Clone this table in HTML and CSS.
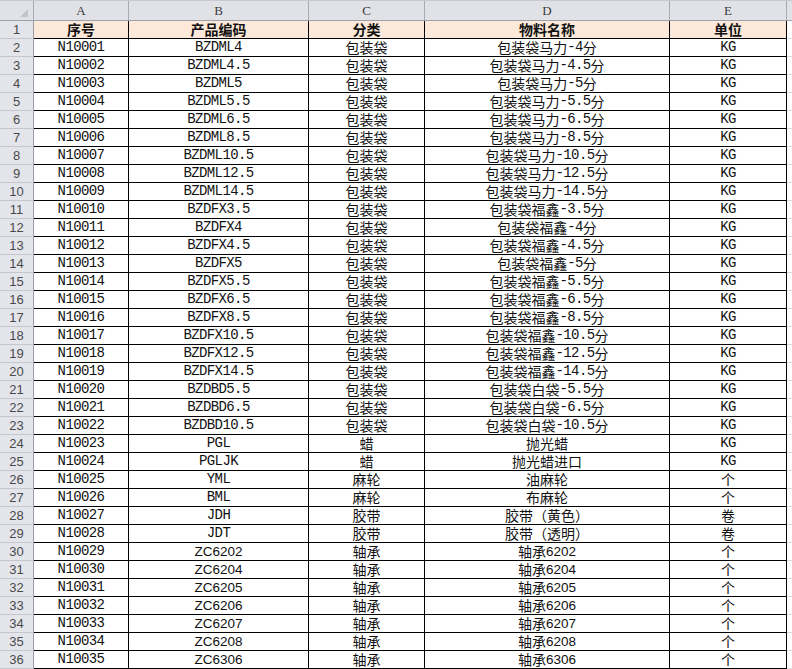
FILE: index.html
```html
<!DOCTYPE html>
<html lang="zh">
<head>
<meta charset="utf-8">
<title>物料表</title>
<link rel="stylesheet" href="styles.css">
</head>
<body>
<div class="sheet">
  <div class="colhead">
    <div class="h rh corner"><span class="tri"></span></div>
    <div class="h a">A</div>
    <div class="h b">B</div>
    <div class="h cc">C</div>
    <div class="h d">D</div>
    <div class="h e">E</div>
    <div class="h f"></div>
  </div>

  <div class="row top">
    <div class="c rh">1</div>
    <div class="c a">序号</div>
    <div class="c b">产品编码</div>
    <div class="c cc">分类</div>
    <div class="c d">物料名称</div>
    <div class="c e">单位</div>
    <div class="c f"></div>
  </div>

  <div class="row"><div class="c rh">2</div><div class="c a m">N10001</div><div class="c b m">BZDML4</div><div class="c cc">包装袋</div><div class="c d">包装袋马力<span class="m">-4</span>分</div><div class="c e m">KG</div><div class="c f"></div></div>
  <div class="row"><div class="c rh">3</div><div class="c a m">N10002</div><div class="c b m">BZDML4.5</div><div class="c cc">包装袋</div><div class="c d">包装袋马力<span class="m">-4.5</span>分</div><div class="c e m">KG</div><div class="c f"></div></div>
  <div class="row"><div class="c rh">4</div><div class="c a m">N10003</div><div class="c b m">BZDML5</div><div class="c cc">包装袋</div><div class="c d">包装袋马力<span class="m">-5</span>分</div><div class="c e m">KG</div><div class="c f"></div></div>
  <div class="row"><div class="c rh">5</div><div class="c a m">N10004</div><div class="c b m">BZDML5.5</div><div class="c cc">包装袋</div><div class="c d">包装袋马力<span class="m">-5.5</span>分</div><div class="c e m">KG</div><div class="c f"></div></div>
  <div class="row"><div class="c rh">6</div><div class="c a m">N10005</div><div class="c b m">BZDML6.5</div><div class="c cc">包装袋</div><div class="c d">包装袋马力<span class="m">-6.5</span>分</div><div class="c e m">KG</div><div class="c f"></div></div>
  <div class="row"><div class="c rh">7</div><div class="c a m">N10006</div><div class="c b m">BZDML8.5</div><div class="c cc">包装袋</div><div class="c d">包装袋马力<span class="m">-8.5</span>分</div><div class="c e m">KG</div><div class="c f"></div></div>
  <div class="row"><div class="c rh">8</div><div class="c a m">N10007</div><div class="c b m">BZDML10.5</div><div class="c cc">包装袋</div><div class="c d">包装袋马力<span class="m">-10.5</span>分</div><div class="c e m">KG</div><div class="c f"></div></div>
  <div class="row"><div class="c rh">9</div><div class="c a m">N10008</div><div class="c b m">BZDML12.5</div><div class="c cc">包装袋</div><div class="c d">包装袋马力<span class="m">-12.5</span>分</div><div class="c e m">KG</div><div class="c f"></div></div>
  <div class="row"><div class="c rh">10</div><div class="c a m">N10009</div><div class="c b m">BZDML14.5</div><div class="c cc">包装袋</div><div class="c d">包装袋马力<span class="m">-14.5</span>分</div><div class="c e m">KG</div><div class="c f"></div></div>
  <div class="row"><div class="c rh">11</div><div class="c a m">N10010</div><div class="c b m">BZDFX3.5</div><div class="c cc">包装袋</div><div class="c d">包装袋福鑫<span class="m">-3.5</span>分</div><div class="c e m">KG</div><div class="c f"></div></div>
  <div class="row"><div class="c rh">12</div><div class="c a m">N10011</div><div class="c b m">BZDFX4</div><div class="c cc">包装袋</div><div class="c d">包装袋福鑫<span class="m">-4</span>分</div><div class="c e m">KG</div><div class="c f"></div></div>
  <div class="row"><div class="c rh">13</div><div class="c a m">N10012</div><div class="c b m">BZDFX4.5</div><div class="c cc">包装袋</div><div class="c d">包装袋福鑫<span class="m">-4.5</span>分</div><div class="c e m">KG</div><div class="c f"></div></div>
  <div class="row"><div class="c rh">14</div><div class="c a m">N10013</div><div class="c b m">BZDFX5</div><div class="c cc">包装袋</div><div class="c d">包装袋福鑫<span class="m">-5</span>分</div><div class="c e m">KG</div><div class="c f"></div></div>
  <div class="row"><div class="c rh">15</div><div class="c a m">N10014</div><div class="c b m">BZDFX5.5</div><div class="c cc">包装袋</div><div class="c d">包装袋福鑫<span class="m">-5.5</span>分</div><div class="c e m">KG</div><div class="c f"></div></div>
  <div class="row"><div class="c rh">16</div><div class="c a m">N10015</div><div class="c b m">BZDFX6.5</div><div class="c cc">包装袋</div><div class="c d">包装袋福鑫<span class="m">-6.5</span>分</div><div class="c e m">KG</div><div class="c f"></div></div>
  <div class="row"><div class="c rh">17</div><div class="c a m">N10016</div><div class="c b m">BZDFX8.5</div><div class="c cc">包装袋</div><div class="c d">包装袋福鑫<span class="m">-8.5</span>分</div><div class="c e m">KG</div><div class="c f"></div></div>
  <div class="row"><div class="c rh">18</div><div class="c a m">N10017</div><div class="c b m">BZDFX10.5</div><div class="c cc">包装袋</div><div class="c d">包装袋福鑫<span class="m">-10.5</span>分</div><div class="c e m">KG</div><div class="c f"></div></div>
  <div class="row"><div class="c rh">19</div><div class="c a m">N10018</div><div class="c b m">BZDFX12.5</div><div class="c cc">包装袋</div><div class="c d">包装袋福鑫<span class="m">-12.5</span>分</div><div class="c e m">KG</div><div class="c f"></div></div>
  <div class="row"><div class="c rh">20</div><div class="c a m">N10019</div><div class="c b m">BZDFX14.5</div><div class="c cc">包装袋</div><div class="c d">包装袋福鑫<span class="m">-14.5</span>分</div><div class="c e m">KG</div><div class="c f"></div></div>
  <div class="row"><div class="c rh">21</div><div class="c a m">N10020</div><div class="c b m">BZDBD5.5</div><div class="c cc">包装袋</div><div class="c d">包装袋白袋<span class="m">-5.5</span>分</div><div class="c e m">KG</div><div class="c f"></div></div>
  <div class="row"><div class="c rh">22</div><div class="c a m">N10021</div><div class="c b m">BZDBD6.5</div><div class="c cc">包装袋</div><div class="c d">包装袋白袋<span class="m">-6.5</span>分</div><div class="c e m">KG</div><div class="c f"></div></div>
  <div class="row"><div class="c rh">23</div><div class="c a m">N10022</div><div class="c b m">BZDBD10.5</div><div class="c cc">包装袋</div><div class="c d">包装袋白袋<span class="m">-10.5</span>分</div><div class="c e m">KG</div><div class="c f"></div></div>
  <div class="row"><div class="c rh">24</div><div class="c a m">N10023</div><div class="c b m">PGL</div><div class="c cc">蜡</div><div class="c d">抛光蜡</div><div class="c e m">KG</div><div class="c f"></div></div>
  <div class="row"><div class="c rh">25</div><div class="c a m">N10024</div><div class="c b m">PGLJK</div><div class="c cc">蜡</div><div class="c d">抛光蜡进口</div><div class="c e m">KG</div><div class="c f"></div></div>
  <div class="row"><div class="c rh">26</div><div class="c a m">N10025</div><div class="c b m">YML</div><div class="c cc">麻轮</div><div class="c d">油麻轮</div><div class="c e">个</div><div class="c f"></div></div>
  <div class="row"><div class="c rh">27</div><div class="c a m">N10026</div><div class="c b m">BML</div><div class="c cc">麻轮</div><div class="c d">布麻轮</div><div class="c e">个</div><div class="c f"></div></div>
  <div class="row"><div class="c rh">28</div><div class="c a m">N10027</div><div class="c b m">JDH</div><div class="c cc">胶带</div><div class="c d">胶带（黄色）</div><div class="c e">卷</div><div class="c f"></div></div>
  <div class="row"><div class="c rh">29</div><div class="c a m">N10028</div><div class="c b m">JDT</div><div class="c cc">胶带</div><div class="c d">胶带（透明）</div><div class="c e">卷</div><div class="c f"></div></div>
  <div class="row"><div class="c rh">30</div><div class="c a m">N10029</div><div class="c b s">ZC6202</div><div class="c cc">轴承</div><div class="c d">轴承<span class="s">6202</span></div><div class="c e">个</div><div class="c f"></div></div>
  <div class="row"><div class="c rh">31</div><div class="c a m">N10030</div><div class="c b s">ZC6204</div><div class="c cc">轴承</div><div class="c d">轴承<span class="s">6204</span></div><div class="c e">个</div><div class="c f"></div></div>
  <div class="row"><div class="c rh">32</div><div class="c a m">N10031</div><div class="c b s">ZC6205</div><div class="c cc">轴承</div><div class="c d">轴承<span class="s">6205</span></div><div class="c e">个</div><div class="c f"></div></div>
  <div class="row"><div class="c rh">33</div><div class="c a m">N10032</div><div class="c b s">ZC6206</div><div class="c cc">轴承</div><div class="c d">轴承<span class="s">6206</span></div><div class="c e">个</div><div class="c f"></div></div>
  <div class="row"><div class="c rh">34</div><div class="c a m">N10033</div><div class="c b s">ZC6207</div><div class="c cc">轴承</div><div class="c d">轴承<span class="s">6207</span></div><div class="c e">个</div><div class="c f"></div></div>
  <div class="row"><div class="c rh">35</div><div class="c a m">N10034</div><div class="c b s">ZC6208</div><div class="c cc">轴承</div><div class="c d">轴承<span class="s">6208</span></div><div class="c e">个</div><div class="c f"></div></div>
  <div class="row"><div class="c rh">36</div><div class="c a m">N10035</div><div class="c b s">ZC6306</div><div class="c cc">轴承</div><div class="c d">轴承<span class="s">6306</span></div><div class="c e">个</div><div class="c f"></div></div>
</div>
</body>
</html>
```

FILE: styles.css
```css
* {
  box-sizing: border-box;
  margin: 0;
  padding: 0;
}

html, body {
  margin: 0;
  background: #ffffff;
  overflow: hidden;
}

body {
  font-family: "Noto Sans CJK SC", sans-serif;
  color: #111111;
}

.sheet {
  width: 792px;
}

.colhead {
  display: flex;
  height: 21px;
  background: #e1e2e8;
  border-top: 1px solid #c9cad0;
}

.row {
  display: flex;
  height: 18px;
}

.h,
.c {
  flex: none;
  display: flex;
  align-items: center;
  justify-content: center;
  white-space: nowrap;
}

.h {
  height: 100%;
  border-right: 1px solid #a9abb2;
  border-bottom: 1px solid #9fa1a8;
  font-family: "Liberation Serif", serif;
  font-size: 13px;
  line-height: 16px;
  color: #3a3a3a;
}

.c {
  height: 18px;
  border-right: 1px solid #000000;
  border-bottom: 1px solid #000000;
  font-size: 14px;
  line-height: 17px;
}

.rh {
  width: 34px;
}

.a { width: 95px; }
.b { width: 180px; }
.cc { width: 116px; }
.d { width: 245px; }
.e { width: 117px; }
.f {
  flex: 1;
}

.c.rh {
  background: #e4e5ea;
  border-right-color: #9c9ea5;
  border-bottom-color: #c6c7cc;
  font-family: "Liberation Sans", sans-serif;
  font-size: 13px;
  color: #4a4a4a;
}

.c.f {
  border-right: none;
  border-bottom-color: #dcdde0;
}

.h.f {
  border-right: none;
}

.corner {
  align-items: flex-end;
  justify-content: flex-end;
  padding: 0 5px 3px 0;
}

.tri {
  width: 0;
  height: 0;
  border-left: 8px solid transparent;
  border-bottom: 8px solid #c4c5ca;
}

.top .c {
  background: #fde9d9;
  font-weight: 700;
}

.top .c.rh {
  background: #e4e5ea;
  font-weight: 400;
}

.top .c.f {
  background: #ffffff;
}

.m {
  font-family: "Liberation Mono", monospace;
  font-size: 14px;
  letter-spacing: -0.6px;
}

.s {
  font-family: "Liberation Sans", sans-serif;
  font-size: 13.5px;
}
```
